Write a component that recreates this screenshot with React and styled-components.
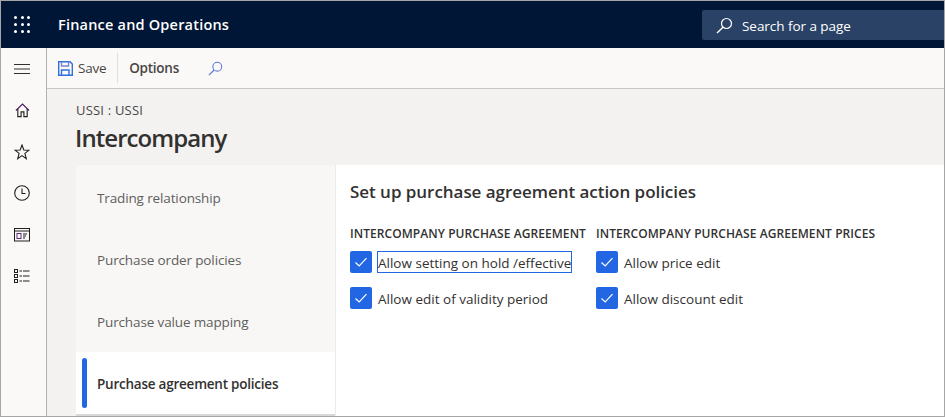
import React from "react";
import styled, { createGlobalStyle } from "styled-components";

const GlobalStyle = createGlobalStyle`
  html, body {
    margin: 0;
    padding: 0;
    height: 100%;
    overflow: hidden;
  }
  body {
    font-family: "Open Sans", "Noto Sans", sans-serif;
    color: #323130;
  }
`;

const Page = styled.div`
  width: 945px;
  height: 417px;
  box-sizing: border-box;
  border: 1px solid #a6a6a6;
  display: flex;
  flex-direction: column;
  overflow: hidden;
  background: #f3f2f1;
`;

const Header = styled.header`
  height: 47px;
  flex: none;
  background: #001636;
  display: flex;
  align-items: center;
`;

const Waffle = styled.div`
  width: 16px;
  margin-left: 13px;
  display: grid;
  grid-template-columns: repeat(3, 3px);
  gap: 4px 3.5px;

  span {
    width: 3px;
    height: 3px;
    border-radius: 50%;
    background: #fff;
  }
`;

const AppName = styled.div`
  margin-left: 28px;
  font-size: 14.5px;
  font-weight: 600;
  letter-spacing: 0.2px;
  color: #fff;
`;

const SearchBox = styled.div`
  margin-left: auto;
  width: 242px;
  height: 30px;
  margin-top: 1px;
  background: #2a4266;
  border-radius: 2px 0 0 2px;
  display: flex;
  align-items: center;
  padding-left: 14px;
  gap: 9px;
  box-sizing: border-box;
  color: #fff;
  font-size: 13.5px;
  letter-spacing: -0.05px;
`;

const SearchText = styled.span`
  padding-top: 2px;
`;

const Body = styled.div`
  flex: 1;
  display: flex;
  min-height: 0;
`;

const Rail = styled.nav`
  width: 42px;
  padding-right: 3px;
  flex: none;
  background: #faf9f8;
  border-right: 1px solid #b4b2b0;
  display: flex;
  flex-direction: column;
  align-items: center;
`;

const RailItem = styled.div`
  height: 41.5px;
  width: 100%;
  display: flex;
  align-items: center;
  justify-content: center;
  color: #323130;
`;

const Main = styled.main`
  flex: 1;
  display: flex;
  flex-direction: column;
  min-width: 0;
`;

const Toolbar = styled.div`
  height: 41px;
  flex: none;
  box-sizing: border-box;
  background: #faf9f8;
  border-bottom: 1px solid #c8c6c4;
  display: flex;
  align-items: center;
  padding-left: 11px;
  font-size: 13.5px;
  letter-spacing: -0.25px;
`;

const ToolButton = styled.div`
  display: flex;
  align-items: center;
  gap: 5px;
  color: #484644;
`;

const Divider = styled.div`
  width: 1px;
  height: 30px;
  background: #e1dfdd;
  margin: 0 11px 0 11px;
`;

const ToolLabel = styled.div`
  font-weight: 600;
  color: #484644;
`;

const ToolIcon = styled.div`
  margin-left: 29px;
  display: flex;
`;

const Content = styled.div`
  flex: 1;
  padding: 13px 0 0 29px;
  min-height: 0;
`;

const Breadcrumb = styled.div`
  font-size: 13px;
  line-height: 17px;
  letter-spacing: 0.2px;
  color: #484644;
`;

const Title = styled.h1`
  margin: 3px 0 0 -1px;
  font-size: 24px;
  line-height: 32px;
  font-weight: 600;
  letter-spacing: -0.93px;
  color: #323130;
`;

const Panel = styled.div`
  margin-top: 11px;
  display: flex;
  height: 252px;
`;

const TabList = styled.div`
  width: 260px;
  flex: none;
  background: #f8f7f6;
  border-right: 1px solid #edebe9;
  box-sizing: border-box;
  height: 250px;
  padding-top: 1px;
`;

const Tab = styled.div`
  position: relative;
  height: 62px;
  box-sizing: border-box;
  display: flex;
  align-items: center;
  padding: 2px 0 0 21px;
  font-size: 13.5px;
  letter-spacing: ${(props) => (props.$active ? "-0.23px" : "-0.13px")};
  color: ${(props) => (props.$active ? "#323130" : "#605e5c")};
  font-weight: ${(props) => (props.$active ? 600 : 400)};
  background: ${(props) => (props.$active ? "#fff" : "transparent")};
  box-shadow: ${(props) => (props.$active ? "0 2px 0 #d9d8d6" : "none")};

  &::before {
    content: "";
    display: ${(props) => (props.$active ? "block" : "none")};
    position: absolute;
    left: 6px;
    top: 6px;
    bottom: 6px;
    width: 5px;
    border-radius: 3px;
    background: #2266e3;
  }
`;

const Pane = styled.section`
  flex: 1;
  background: #fff;
  padding: 15px 0 0 14px;
  min-width: 0;
`;

const PaneTitle = styled.h2`
  margin: 0;
  font-size: 17px;
  line-height: 24px;
  font-weight: 600;
  letter-spacing: -0.04px;
  color: #323130;
`;

const Columns = styled.div`
  display: flex;
  margin-top: 22px;
`;

const Column = styled.div`
  width: ${(props) => props.$width}px;
  flex: none;
`;

const GroupTitle = styled.div`
  font-size: 12px;
  line-height: 16px;
  font-weight: 600;
  letter-spacing: 0.07px;
  white-space: nowrap;
  color: #323130;
  margin-bottom: 9px;
`;

const CheckRow = styled.div`
  height: 36px;
  display: flex;
  align-items: flex-start;
  gap: 5px;
  font-size: 13.5px;
  color: #323130;
`;

const CheckBox = styled.div`
  width: 22px;
  height: 22px;
  flex: none;
  border-radius: 2px;
  background: #2266e3;
  display: flex;
  align-items: center;
  justify-content: center;
`;

const CheckLabel = styled.div`
  height: 22px;
  line-height: 22px;
  box-sizing: border-box;
  border: 1px solid ${(props) => (props.$focused ? "#2266e3" : "transparent")};
  white-space: nowrap;
`;

const Check = () => (
  <CheckBox>
    <svg width="14" height="14" viewBox="0 0 14 14" fill="none" stroke="#fff" strokeWidth="1.2">
      <path d="M1.5 7.5 L5.2 11 L12.5 3.2" />
    </svg>
  </CheckBox>
);

const SearchGlass = ({ color, size = 17 }) => (
  <svg width={size} height={size} viewBox="0 0 17 17" fill="none" stroke={color} strokeWidth="1.2">
    <circle cx="10.5" cy="6.5" r="5" />
    <path d="M7 10.2 L1 16" strokeWidth="1.4" />
  </svg>
);

const railIcons = [
  <svg key="home" width="15" height="15" viewBox="0 0 16 16" fill="none" stroke="#201f1e" strokeWidth="1.2">
    <path d="M1 8 L8 1.2 L15 8" stroke="#4a1a5e" />
    <path d="M3 6.5 V14.5 H6.5 V9.5 H9.5 V14.5 H13 V6.5" />
  </svg>,
  <svg key="star" width="16" height="16" viewBox="0 0 16 16" fill="none" stroke="#201f1e" strokeWidth="1.1">
    <path d="M8 1 L9.8 6 L15 6.2 L10.9 9.4 L12.3 14.6 L8 11.6 L3.7 14.6 L5.1 9.4 L1 6.2 L6.2 6 Z" />
  </svg>,
  <svg key="clock" width="16" height="16" viewBox="0 0 16 16" fill="none" stroke="#201f1e" strokeWidth="1.1">
    <circle cx="8" cy="8" r="7.3" />
    <path d="M8 3.5 V8.5 H11.5" />
  </svg>,
  <svg key="workspace" width="16" height="14" viewBox="0 0 16 14" fill="none" stroke="#201f1e" strokeWidth="1">
    <rect x="0.5" y="0.5" width="15" height="12.5" />
    <path d="M0.5 3 H15.5" />
    <rect x="3" y="5.5" width="4" height="5" stroke="#5c2e7e" />
    <path d="M9 6 H13 M9 8 H12 M9 10 H11" />
  </svg>,
  <svg key="list" width="16" height="15" viewBox="0 0 16 15" fill="none" stroke="#201f1e" strokeWidth="1">
    <rect x="0.5" y="0.5" width="3" height="3" />
    <rect x="0.5" y="5.5" width="3" height="3" />
    <rect x="0.5" y="10.5" width="3" height="3" />
    <path d="M5.5 2 H8 M9 2 H15.5 M5.5 7 H8 M9 7 H15.5 M5.5 12 H8 M9 12 H15.5" />
  </svg>,
];

const tabs = ["Trading relationship", "Purchase order policies", "Purchase value mapping"];

const App = () => {
  return (
    <Page>
      <GlobalStyle />
      <Header>
        <Waffle>
          {Array.from({ length: 9 }).map((_, i) => (
            <span key={i} />
          ))}
        </Waffle>
        <AppName>Finance and Operations</AppName>
        <SearchBox>
          <SearchGlass color="#fff" />
          <SearchText>Search for a page</SearchText>
        </SearchBox>
      </Header>
      <Body>
        <Rail>
          <RailItem>
            <svg width="16" height="10" viewBox="0 0 16 10" stroke="#323130" strokeWidth="1">
              <path d="M0 0.5 H16 M0 5 H16 M0 9.5 H16" />
            </svg>
          </RailItem>
          {railIcons.map((icon) => (
            <RailItem key={icon.key}>{icon}</RailItem>
          ))}
        </Rail>
        <Main>
          <Toolbar>
            <ToolButton>
              <svg width="15" height="15" viewBox="0 0 15 15" fill="none" stroke="#2f6fe0" strokeWidth="1.4">
                <path d="M0.7 0.7 H12 L14.3 3 V14.3 H0.7 Z" />
                <path d="M3.5 0.8 V5 H10.5 V0.8" stroke="#7b83c9" />
                <path d="M3.5 14 V9 H11 V14" />
              </svg>
              Save
            </ToolButton>
            <Divider />
            <ToolLabel>Options</ToolLabel>
            <ToolIcon>
              <SearchGlass color="#5a78d8" size={15} />
            </ToolIcon>
          </Toolbar>
          <Content>
            <Breadcrumb>USSI : USSI</Breadcrumb>
            <Title>Intercompany</Title>
            <Panel>
              <TabList>
                {tabs.map((tab) => (
                  <Tab key={tab}>{tab}</Tab>
                ))}
                <Tab $active>Purchase agreement policies</Tab>
              </TabList>
              <Pane>
                <PaneTitle>Set up purchase agreement action policies</PaneTitle>
                <Columns>
                  <Column $width={246}>
                    <GroupTitle>INTERCOMPANY PURCHASE AGREEMENT</GroupTitle>
                    <CheckRow>
                      <Check />
                      <CheckLabel $focused>Allow setting on hold /effective</CheckLabel>
                    </CheckRow>
                    <CheckRow>
                      <Check />
                      <CheckLabel>Allow edit of validity period</CheckLabel>
                    </CheckRow>
                  </Column>
                  <Column $width={300}>
                    <GroupTitle>INTERCOMPANY PURCHASE AGREEMENT PRICES</GroupTitle>
                    <CheckRow>
                      <Check />
                      <CheckLabel>Allow price edit</CheckLabel>
                    </CheckRow>
                    <CheckRow>
                      <Check />
                      <CheckLabel>Allow discount edit</CheckLabel>
                    </CheckRow>
                  </Column>
                </Columns>
              </Pane>
            </Panel>
          </Content>
        </Main>
      </Body>
    </Page>
  );
};

export default App;
